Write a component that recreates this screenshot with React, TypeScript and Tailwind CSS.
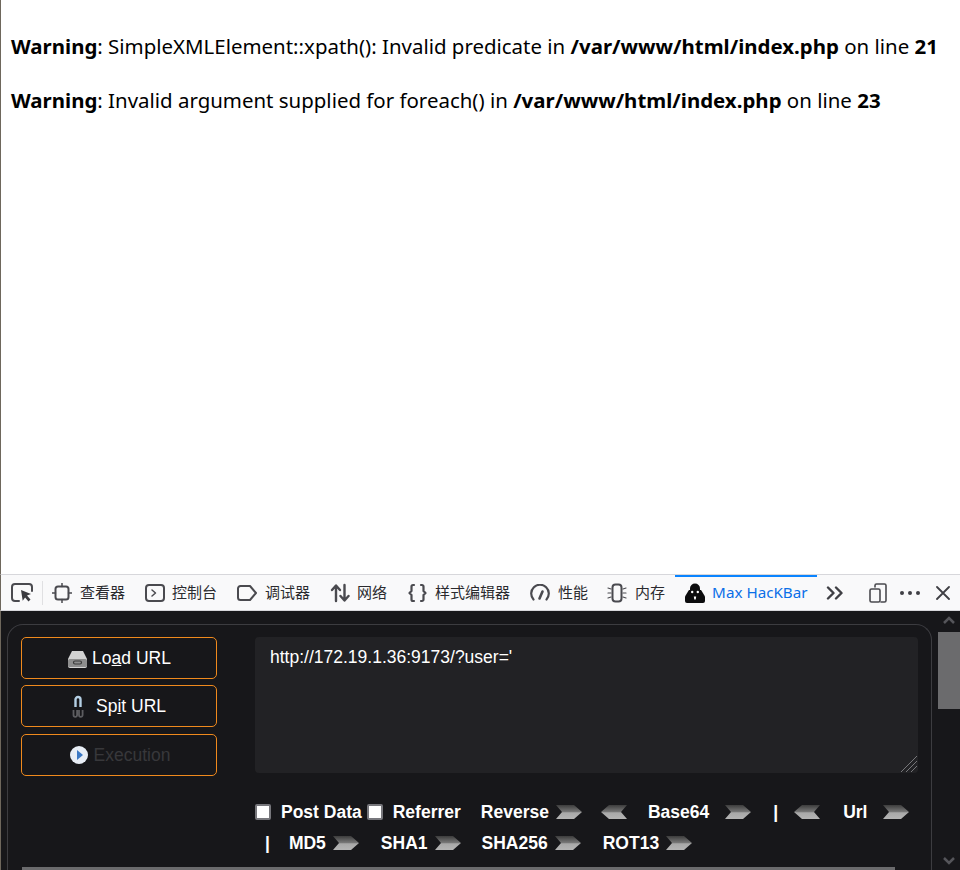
import { ReactNode } from "react";

function Chevron({ left = false }: { left?: boolean }) {
  const id = left ? "chevL" : "chevR";
  return (
    <svg width="28" height="16" viewBox="0 0 28 16" className="shrink-0">
      <defs>
        <linearGradient id={id} x1="0" y1="0" x2="0" y2="1">
          <stop offset="0" stopColor="#3c3c3c" />
          <stop offset="0.5" stopColor="#7a7a7a" />
          <stop offset="0.55" stopColor="#a8a8a8" />
          <stop offset="1" stopColor="#b4b4b4" />
        </linearGradient>
      </defs>
      <polygon
        fill={`url(#${id})`}
        points={left ? "9,1 27,1 21,8 27,15 9,15 1,8" : "1,1 19,1 27,8 19,15 1,15 7,8"}
      />
    </svg>
  );
}

function Tab({ icon, label, className }: { icon: ReactNode; label: string; className: string }) {
  return (
    <div className={`flex items-center ${className}`}>
      {icon}
      <span className="text-[15px] leading-none text-[#2a2a2e] whitespace-nowrap">{label}</span>
    </div>
  );
}

const stroke = {
  fill: "none",
  stroke: "#4a4a4f",
  strokeWidth: 2,
  strokeLinecap: "round" as const,
  strokeLinejoin: "round" as const,
};

function HackButton({ children, className = "" }: { children: ReactNode; className?: string }) {
  return (
    <button className={`h-[42px] w-[196px] flex items-center justify-center rounded-[5px] border border-[#f08a1d] bg-[#17171a] text-[17.5px] ${className}`}>
      {children}
    </button>
  );
}

function Check({ className = "" }: { className?: string }) {
  return <span className={`block w-4 h-4 shrink-0 rounded-[2px] bg-white border-2 border-[#77777c] ${className}`} />;
}

export default function App() {
  return (
    <div className="relative h-[870px] w-[960px] overflow-hidden flex flex-col bg-white font-['Noto_Sans','Noto_Sans_CJK_SC',sans-serif]">
      {/* page output */}
      <div className="h-[574px] border-l border-[#6e675c] pl-[10px] pt-[33px] text-[20.45px] leading-[27px] text-black whitespace-nowrap">
        <p><b>Warning</b>: SimpleXMLElement::xpath(): Invalid predicate in <b>/var/www/html/index.php</b> on line <b>21</b></p>
        <p className="mt-[27px]"><b>Warning</b>: Invalid argument supplied for foreach() in <b>/var/www/html/index.php</b> on line <b>23</b></p>
      </div>

      {/* devtools toolbar */}
      <div className="h-[37px] flex items-center bg-[#f9f9fa] border-t border-b border-[#d7d7db] border-l border-l-[#6e675c] relative">
        <svg width="22" height="20" viewBox="0 0 22 20" className="ml-[10px]">
          <path d="M8 18H4a3 3 0 0 1-3-3V4a3 3 0 0 1 3-3h14a3 3 0 0 1 3 3v4" {...stroke} />
          <path d="M10 7l10 4-4 1.6 3.5 4-2 1.8-3.4-4-2.4 3.4z" fill="#3a3a3f" />
        </svg>
        <div className="ml-[9px] w-px h-6 bg-[#e0e0e2]" />
        <Tab
          className="ml-[9px] gap-[8px]"
          label="查看器"
          icon={
            <svg width="20" height="20" viewBox="0 0 20 20">
              <rect x="3.5" y="3.5" width="13" height="13" rx="2.5" {...stroke} />
              <path d="M10 0v3.5M10 16.5V20M0 10h3.5M16.5 10H20" {...stroke} strokeWidth={1.5} />
            </svg>
          }
        />
        <Tab
          className="ml-[20px] gap-[6px]"
          label="控制台"
          icon={
            <svg width="21" height="18" viewBox="0 0 21 18">
              <rect x="1" y="1" width="18" height="16" rx="3" {...stroke} />
              <path d="M7 6l3.5 3L7 12" {...stroke} strokeWidth={1.5} />
            </svg>
          }
        />
        <Tab
          className="ml-[20px] gap-[7px]"
          label="调试器"
          icon={
            <svg width="21" height="16" viewBox="0 0 21 16">
              <path d="M3.5 1H13l6 7-6 7H3.5A2.5 2.5 0 0 1 1 12.5v-9A2.5 2.5 0 0 1 3.5 1z" {...stroke} />
            </svg>
          }
        />
        <Tab
          className="ml-[20px] gap-[7px]"
          label="网络"
          icon={
            <svg width="20" height="20" viewBox="0 0 20 20">
              <path d="M6 18V3M2 7l4-4.500L10 7" {...stroke} strokeWidth={2.4} />
              <path d="M14.500 2v15M10.500 13l4 4.500 4-4.500" {...stroke} strokeWidth={2.4} />
            </svg>
          }
        />
        <Tab
          className="ml-[21px] gap-[8px]"
          label="样式编辑器"
          icon={
            <svg width="19" height="20" viewBox="0 0 19 20">
              <path d="M6 2H5a1.500 1.500 0 0 0-1.500 1.500V8L1.500 10l2 2v4.500A1.500 1.500 0 0 0 5 18h1" {...stroke} strokeWidth={2.2} />
              <path d="M13 2h1a1.500 1.500 0 0 1 1.500 1.500V8l2 2-2 2v4.500A1.500 1.500 0 0 1 14 18h-1" {...stroke} strokeWidth={2.2} />
            </svg>
          }
        />
        <Tab
          className="ml-[20px] gap-[8px]"
          label="性能"
          icon={
            <svg width="20" height="18" viewBox="0 0 20 18">
              <path d="M3.500 15.500A8.800 8.800 0 1 1 16.500 15.500" {...stroke} strokeWidth={2.2} />
              <path d="M12.500 7.500L9.500 14.500" {...stroke} strokeWidth={2.6} />
            </svg>
          }
        />
        <Tab
          className="ml-[19px] gap-[8px]"
          label="内存"
          icon={
            <svg width="20" height="20" viewBox="0 0 20 20">
              <rect x="5.500" y="1.500" width="9" height="17" rx="3" {...stroke} />
              <path d="M1 5l3 1M1 10h3M1 15l3-1M19 5l-3 1M19 10h-3M19 15l-3-1" {...stroke} strokeWidth={1.2} />
            </svg>
          }
        />
        {/* active tab */}
        <div className="ml-[10px] w-[142px] h-full flex items-center gap-[7px] pl-[10px] border-t-2 border-[#0a84ff] -mt-px">
          <svg width="20" height="20" viewBox="0 0 20 20">
            <path d="M5 9V5.500a5 5 0 0 1 10 0V9z" fill="#0c0c0d" />
            <path d="M4 7h12l1 1.500 3 5V18a2 2 0 0 1-2 2H2a2 2 0 0 1-2-2v-4.500l3-5z" fill="#0c0c0d" />
            <circle cx="7.200" cy="9" r="1.200" fill="#fff" />
            <circle cx="12.800" cy="9" r="1.200" fill="#fff" />
            <path d="M8.800 13.500h2.400l-.5 3H9.300z" fill="#fff" />
          </svg>
          <span className="text-[15.2px] leading-none text-[#0a6fe8] whitespace-nowrap">Max HacKBar</span>
        </div>
        <svg width="18" height="14" viewBox="0 0 18 14" className="ml-[9px]">
          <path d="M2 1.500L7.500 7 2 12.500M10 1.500L15.500 7 10 12.500" fill="none" stroke="#3f3f44" strokeWidth="2.400" strokeLinecap="round" strokeLinejoin="round" />
        </svg>
        <svg width="20" height="20" viewBox="0 0 20 20" className="ml-[24px]">
          <path d="M7 4V2.500A1.500 1.500 0 0 1 8.500 1h8A1.500 1.500 0 0 1 18 2.500v15a1.500 1.500 0 0 1-1.500 1.500H13" {...stroke} strokeWidth={1.600} />
          <rect x="2" y="6" width="10" height="13" rx="1.500" {...stroke} strokeWidth={1.600} />
        </svg>
        <div className="ml-[12px] w-5 flex justify-between">
          <span className="w-1 h-1 rounded-full bg-[#3f3f44]" />
          <span className="w-1 h-1 rounded-full bg-[#3f3f44]" />
          <span className="w-1 h-1 rounded-full bg-[#3f3f44]" />
        </div>
        <svg width="14" height="14" viewBox="0 0 14 14" className="ml-[16px]">
          <path d="M1 1l12 12M13 1L1 13" fill="none" stroke="#3f3f44" strokeWidth="1.800" strokeLinecap="round" />
        </svg>
      </div>

      {/* hackbar panel */}
      <div className="relative flex-1 flex bg-[#17171a] border-l border-l-[#6e675c] font-['Liberation_Sans',sans-serif] text-white overflow-hidden">
        <div className="ml-[6px] mt-[13px] w-[925px] rounded-tl-[16px] rounded-tr-[16px] border border-b-0 border-[#3c3c40] shrink-0">
          <div className="flex pt-[12px] pl-[13px]">
            <div className="w-[234px] flex flex-col">
              <HackButton>
                <svg width="21" height="20" viewBox="0 0 21 20" className="mr-[4px] mt-[2px]">
                  <path d="M5 2h11l4 8v7a2 2 0 0 1-2 2H3a2 2 0 0 1-2-2v-7z" fill="#d2d2d2" />
                  <rect x="1" y="10" width="19" height="8" rx="1.500" fill="#8d8d8d" />
                  <rect x="6.500" y="12" width="8" height="3" rx="1.500" fill="none" stroke="#3a3a3a" strokeWidth="1.200" />
                </svg>
                <span>Lo<span className="underline">a</span>d URL</span>
              </HackButton>
              <HackButton className="mt-[6px]">
                <svg width="12" height="23" viewBox="0 0 12 23" className="mr-[12px]">
                  <path d="M3.500 12V4.500a2.500 2.500 0 0 1 5 0V12" fill="none" stroke="#b4cfe4" strokeWidth="2.400" />
                  <path d="M1.500 15v5a1.800 1.800 0 0 0 3.600 0v-5M7 15v5a1.800 1.800 0 0 0 3.600 0v-5" fill="none" stroke="#5d5d60" strokeWidth="1.800" />
                </svg>
                <span>Sp<span className="underline">i</span>t URL</span>
              </HackButton>
              <HackButton className="mt-[7px]">
                <span className="w-[18px] h-[18px] ml-[2px] mr-[6px] rounded-full bg-[#e8eef6] flex items-center justify-center">
                  <span className="w-0 h-0 border-y-[5px] border-y-transparent border-l-[6px] border-l-[#3b78c4] ml-[2px]" />
                </span>
                <span className="text-[#38383b]">Execution</span>
              </HackButton>
            </div>
            <div className="relative w-[663px] h-[136px] rounded-[4px] bg-[#222225] px-[15px] pt-[9px] text-[17.5px] leading-[22px] text-white">
              http://172.19.1.36:9173/?user='
              <svg width="18" height="18" viewBox="0 0 18 18" className="absolute right-0 bottom-0">
                <path d="M1 17L17 1M6 17L17 6M11 17l6-6" fill="none" stroke="#77777a" strokeWidth="1" />
              </svg>
            </div>
          </div>
          <div className="ml-[247px] mt-[26px] h-[20px] flex items-center text-[17.5px] font-bold whitespace-nowrap">
            <Check />
            <span className="ml-[10px]">Post Data</span>
            <Check className="ml-[5px]" />
            <span className="ml-[10px]">Referrer</span>
            <span className="ml-[20px]">Reverse</span>
            <span className="ml-[6px]"><Chevron /></span>
            <span className="ml-[17px]"><Chevron left /></span>
            <span className="ml-[20px]">Base64</span>
            <span className="ml-[15px]"><Chevron /></span>
            <span className="ml-[21px]">|</span>
            <span className="ml-[15px]"><Chevron left /></span>
            <span className="ml-[22px]">Url</span>
            <span className="ml-[15px]"><Chevron /></span>
          </div>
          <div className="ml-[257px] mt-[11px] h-[20px] flex items-center text-[17.5px] font-bold whitespace-nowrap">
            <span>|</span>
            <span className="ml-[19px]">MD5</span>
            <span className="ml-[6px]"><Chevron /></span>
            <span className="ml-[21px]">SHA1</span>
            <span className="ml-[6px]"><Chevron /></span>
            <span className="ml-[20px]">SHA256</span>
            <span className="ml-[6px]"><Chevron /></span>
            <span className="ml-[21px]">ROT13</span>
            <span className="ml-[6px]"><Chevron /></span>
          </div>
        </div>

        {/* vertical scrollbar */}
        <div className="ml-[6px] w-[22px] flex flex-col items-center pt-[21px]">
          <div className="w-[22px] h-[77px] bg-[#6b6b6d]" />
        </div>
        <svg width="14" height="10" viewBox="0 0 14 10" className="absolute right-[4px] bottom-[4px]">
          <path d="M2 2l5 5 5-5" fill="none" stroke="#55555a" strokeWidth="2.500" />
        </svg>
        <svg width="14" height="10" viewBox="0 0 14 10" className="absolute right-[4px] top-[4px]">
          <path d="M2 8l5-5 5 5" fill="none" stroke="#55555a" strokeWidth="2.500" />
        </svg>
        {/* horizontal scrollbar */}
        <div className="absolute left-[21px] bottom-0 w-[873px] h-[3px] bg-[#6b6b6d]" />
      </div>
    </div>
  );
}
